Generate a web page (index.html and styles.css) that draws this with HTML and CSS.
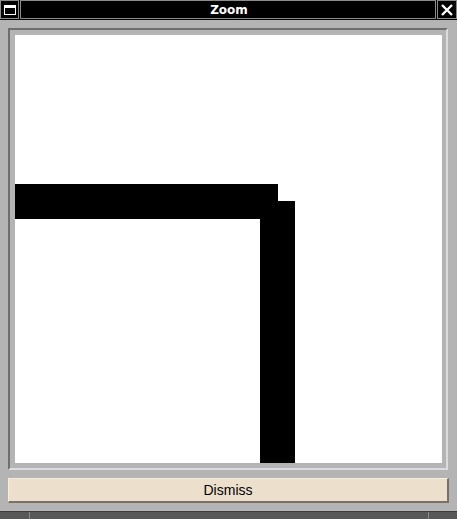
FILE: index.html
```html
<!DOCTYPE html>
<html>
<head>
<meta charset="utf-8">
<link rel="stylesheet" href="styles.css">
</head>
<body>
<div class="window">
  <div class="titlebar">
    <div class="tbtn tbtn-left">
      <svg width="12" height="10" viewBox="0 0 12 10"><rect x="0.5" y="0.5" width="11" height="9" fill="none" stroke="#fff" stroke-width="1"/><rect x="0" y="0" width="12" height="3" fill="#fff"/></svg>
    </div>
    <div class="title">Zoom</div>
    <div class="tbtn tbtn-right">
      <svg width="12" height="12" viewBox="0 0 12 12"><path d="M1 1 L11 11 M11 1 L1 11" stroke="#fff" stroke-width="2.4" fill="none"/></svg>
    </div>
  </div>
  <div class="body">
    <div class="frame">
      <div class="canvas">
        <svg width="427" height="428" viewBox="0 0 427 428">
          <rect x="0" y="149" width="263" height="35" fill="#000"/>
          <rect x="245" y="166" width="35" height="262" fill="#000"/>
        </svg>
      </div>
    </div>
    <button class="dismiss">Dismiss</button>
  </div>
  <div class="statusbar">
    <div class="seg seg-a"></div>
    <div class="seg seg-b"></div>
    <div class="seg seg-c"></div>
  </div>
</div>
</body>
</html>
```
FILE: styles.css
```css
html, body {
  margin: 0;
  padding: 0;
  background: #b4b4b4;
}
.window {
  width: 457px;
  height: 519px;
  display: flex;
  flex-direction: column;
  background: #b4b4b4;
  font-family: "DejaVu Sans", sans-serif;
}
.titlebar {
  height: 20px;
  background: #000;
  display: flex;
  gap: 1px;
  box-sizing: border-box;
}
.tbtn {
  width: 19px;
  height: 19px;
  box-sizing: border-box;
  border: 1px solid #8c8c8c;
  display: flex;
  align-items: center;
  justify-content: center;
  flex: none;
}
.tbtn-right {
  width: 20px;
}
.title {
  flex: 1;
  height: 19px;
  box-sizing: border-box;
  border: 1px solid #8c8c8c;
  color: #fff;
  font-weight: bold;
  font-size: 12px;
  display: flex;
  align-items: center;
  justify-content: center;
  padding-left: 2px;
}
.body {
  flex: 1;
  display: flex;
  flex-direction: column;
  padding: 8px 0 8px 8px;
  gap: 8px;
}
.frame {
  width: 440px;
  height: 442px;
  box-sizing: border-box;
  border: 2px solid;
  border-color: #6e6e6e #dcdcdc #dcdcdc #6e6e6e;
  padding: 5px 4px 5px 5px;
}
.canvas {
  width: 427px;
  height: 428px;
  background: #fff;
  overflow: hidden;
}
.canvas svg {
  display: block;
}
.dismiss {
  width: 441px;
  height: 25px;
  box-sizing: border-box;
  margin: 0;
  padding: 0;
  background: #ecdfcc;
  border: 2px solid;
  border-color: #f7ece0 #7d6f66 #7d6f66 #f7ece0;
  border-top-width: 1px;
  border-left-width: 1px;
  font-family: "Liberation Sans", Arial, sans-serif;
  font-size: 14px;
  color: #000;
}
.statusbar {
  height: 8px;
  display: flex;
  background: #585858;
  border-top: 1px solid #3c3c3c;
  box-sizing: border-box;
}
.seg {
  height: 100%;
}
.seg-a {
  width: 29px;
  border-right: 1px solid #8a8a8a;
}
.seg-b {
  width: 398px;
  border-right: 1px solid #8a8a8a;
}
.seg-c {
  flex: 1;
}
```
